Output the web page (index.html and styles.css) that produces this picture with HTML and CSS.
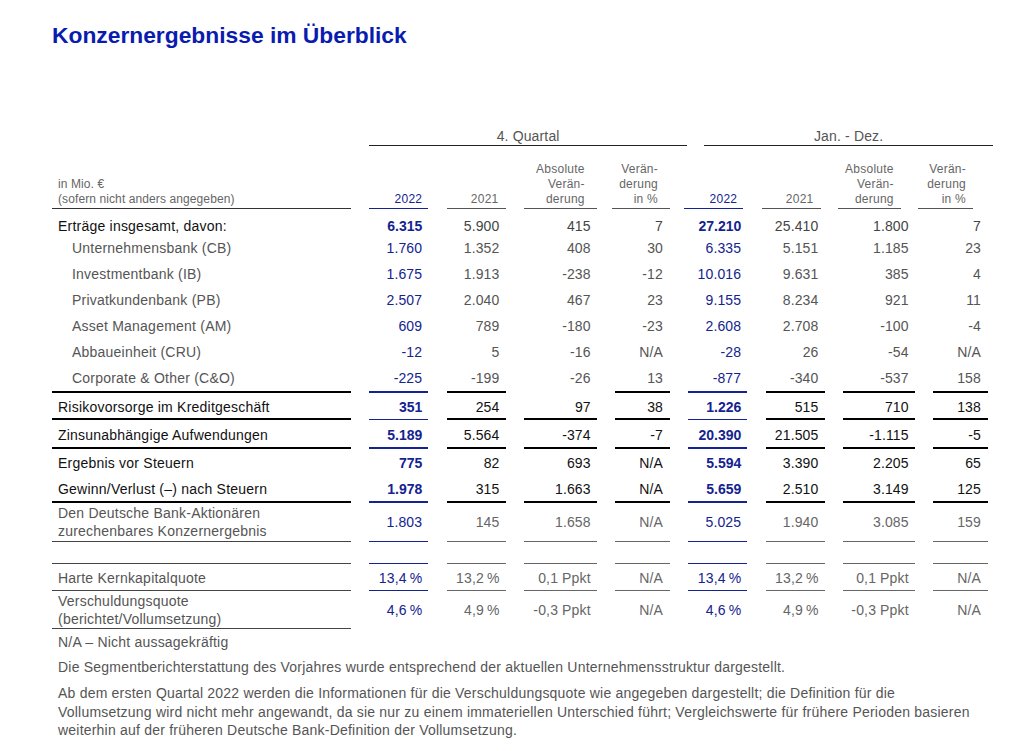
FILE: index.html
```html
<!DOCTYPE html>
<html lang="de">
<head>
<meta charset="utf-8">
<title>Konzernergebnisse im Überblick</title>
<link rel="stylesheet" href="styles.css">
</head>
<body>
<main class="page">
  <h1 class="title">Konzernergebnisse im Überblick</h1>

  <section class="table">
    <div class="tr groups">
      <div class="td label"></div>
      <div class="grp g1">4. Quartal</div>
      <div class="grp g2">Jan. - Dez.</div>
    </div>

    <div class="tr hdr">
      <div class="td label"><span>in Mio. €<br>(sofern nicht anders angegeben)</span></div>
      <div class="td y22 blue"><span>2022</span></div>
      <div class="td hq-21"><span>2021</span></div>
      <div class="td hq-abs"><span>Absolute<br>Verän-<br>derung</span></div>
      <div class="td hq-pct"><span>Verän-<br>derung<br>in %</span></div>
      <div class="td y22 blue hj-22"><span>2022</span></div>
      <div class="td hj-21"><span>2021</span></div>
      <div class="td hj-abs"><span>Absolute<br>Verän-<br>derung</span></div>
      <div class="td hj-pct"><span>Verän-<br>derung<br>in %</span></div>
    </div>

    <div class="tr r-first total">
      <div class="td label">Erträge insgesamt, davon:</div>
      <div class="td y22 bold">6.315</div><div class="td">5.900</div><div class="td">415</div><div class="td pct">7</div>
      <div class="td y22 bold">27.210</div><div class="td">25.410</div><div class="td">1.800</div><div class="td pct">7</div>
    </div>
    <div class="tr r-sub r-ub">
      <div class="td label sub">Unternehmensbank (CB)</div>
      <div class="td y22">1.760</div><div class="td">1.352</div><div class="td">408</div><div class="td pct">30</div>
      <div class="td y22">6.335</div><div class="td">5.151</div><div class="td">1.185</div><div class="td pct">23</div>
    </div>
    <div class="tr r-sub">
      <div class="td label sub">Investmentbank (IB)</div>
      <div class="td y22">1.675</div><div class="td">1.913</div><div class="td">-238</div><div class="td pct">-12</div>
      <div class="td y22">10.016</div><div class="td">9.631</div><div class="td">385</div><div class="td pct">4</div>
    </div>
    <div class="tr r-sub">
      <div class="td label sub">Privatkundenbank (PB)</div>
      <div class="td y22">2.507</div><div class="td">2.040</div><div class="td">467</div><div class="td pct">23</div>
      <div class="td y22">9.155</div><div class="td">8.234</div><div class="td">921</div><div class="td pct">11</div>
    </div>
    <div class="tr r-sub">
      <div class="td label sub">Asset Management (AM)</div>
      <div class="td y22">609</div><div class="td">789</div><div class="td">-180</div><div class="td pct">-23</div>
      <div class="td y22">2.608</div><div class="td">2.708</div><div class="td">-100</div><div class="td pct">-4</div>
    </div>
    <div class="tr r-sub">
      <div class="td label sub">Abbaueinheit (CRU)</div>
      <div class="td y22">-12</div><div class="td">5</div><div class="td">-16</div><div class="td pct">N/A</div>
      <div class="td y22">-28</div><div class="td">26</div><div class="td">-54</div><div class="td pct">N/A</div>
    </div>
    <div class="tr r-sub r-co thick">
      <div class="td label sub">Corporate &amp; Other (C&amp;O)</div>
      <div class="td y22">-225</div><div class="td">-199</div><div class="td nobr">-26</div><div class="td pct">13</div>
      <div class="td y22">-877</div><div class="td">-340</div><div class="td">-537</div><div class="td pct">158</div>
    </div>

    <div class="tr main r-risk thick thinblue">
      <div class="td label">Risikovorsorge im Kreditgeschäft</div>
      <div class="td y22 bold">351</div><div class="td">254</div><div class="td">97</div><div class="td pct">38</div>
      <div class="td y22 bold">1.226</div><div class="td">515</div><div class="td">710</div><div class="td pct">138</div>
    </div>
    <div class="tr main r-zins thick">
      <div class="td label">Zinsunabhängige Aufwendungen</div>
      <div class="td y22 bold">5.189</div><div class="td">5.564</div><div class="td">-374</div><div class="td pct">-7</div>
      <div class="td y22 bold">20.390</div><div class="td">21.505</div><div class="td">-1.115</div><div class="td pct">-5</div>
    </div>
    <div class="tr main r-erg">
      <div class="td label">Ergebnis vor Steuern</div>
      <div class="td y22 bold">775</div><div class="td">82</div><div class="td">693</div><div class="td pct">N/A</div>
      <div class="td y22 bold">5.594</div><div class="td">3.390</div><div class="td">2.205</div><div class="td pct">65</div>
    </div>
    <div class="tr main r-gew thick">
      <div class="td label">Gewinn/Verlust (–) nach Steuern</div>
      <div class="td y22 bold">1.978</div><div class="td">315</div><div class="td">1.663</div><div class="td pct">N/A</div>
      <div class="td y22 bold">5.659</div><div class="td">2.510</div><div class="td">3.149</div><div class="td pct">125</div>
    </div>
    <div class="tr muted r-db thin">
      <div class="td label two">Den Deutsche Bank-Aktionären<br>zurechenbares Konzernergebnis</div>
      <div class="td y22">1.803</div><div class="td">145</div><div class="td">1.658</div><div class="td pct">N/A</div>
      <div class="td y22">5.025</div><div class="td">1.940</div><div class="td">3.085</div><div class="td pct">159</div>
    </div>
    <div class="tr muted r-empty thin">
      <div class="td label"></div>
      <div class="td y22"></div><div class="td"></div><div class="td"></div><div class="td pct"></div>
      <div class="td y22"></div><div class="td"></div><div class="td"></div><div class="td pct"></div>
    </div>
    <div class="tr muted r-harte thin">
      <div class="td label">Harte Kernkapitalquote</div>
      <div class="td y22">13,4&thinsp;%</div><div class="td">13,2&thinsp;%</div><div class="td">0,1 Ppkt</div><div class="td pct">N/A</div>
      <div class="td y22">13,4&thinsp;%</div><div class="td">13,2&thinsp;%</div><div class="td">0,1 Ppkt</div><div class="td pct">N/A</div>
    </div>
    <div class="tr muted r-versch labelrule">
      <div class="td label two">Verschuldungsquote<br>(berichtet/Vollumsetzung)</div>
      <div class="td y22">4,6&thinsp;%</div><div class="td">4,9&thinsp;%</div><div class="td">-0,3 Ppkt</div><div class="td pct">N/A</div>
      <div class="td y22">4,6&thinsp;%</div><div class="td">4,9&thinsp;%</div><div class="td">-0,3 Ppkt</div><div class="td pct">N/A</div>
    </div>
  </section>

  <footer class="notes">
    <p class="note-na">N/A – Nicht aussagekräftig</p>
    <p>Die Segmentberichterstattung des Vorjahres wurde entsprechend der aktuellen Unternehmensstruktur dargestellt.</p>
    <p class="note-long">Ab dem ersten Quartal 2022 werden die Informationen für die Verschuldungsquote wie angegeben dargestellt; die Definition für die<br>Vollumsetzung wird nicht mehr angewandt, da sie nur zu einem immateriellen Unterschied führt; Vergleichswerte für frühere Perioden basieren<br>weiterhin auf der früheren Deutsche Bank-Definition der Vollumsetzung.</p>
  </footer>
</main>
</body>
</html>
```

FILE: styles.css
```css
* { box-sizing: border-box; }

html, body {
  margin: 0;
  padding: 0;
  background: #ffffff;
}

body {
  font-family: "Liberation Sans", Arial, sans-serif;
  color: #111;
}

.page {
  padding: 21px 0 0 52px;
  width: 1032px;
}

.title {
  margin: 0;
  font-size: 22.8px;
  line-height: 28px;
  font-weight: 700;
  color: #0a1cb0;
}

.table {
  margin-top: 78px;
  width: 936px;
  font-size: 14px;
  letter-spacing: 0.15px;
}

.tr {
  display: grid;
  grid-template-columns: 299px 59px 59px 73px 55px 59px 59px 72px 55px;
  column-gap: 18.25px;
}

.td {
  display: flex;
  align-items: center;
  justify-content: flex-end;
  text-align: right;
  padding-right: 6px;
  white-space: nowrap;
  color: #444;
}

.td.pct { padding-right: 7px; }

.td.label {
  justify-content: flex-start;
  text-align: left;
  padding-left: 6px;
  padding-right: 0;
  color: #111;
  letter-spacing: 0.22px;
}

.td.label.sub { padding-left: 20px; color: #555; }

.y22 { color: #14238f; }
.td.bold { font-weight: 700; color: #14238f; letter-spacing: 0; }

/* group header row */
.groups { height: 19px; }
.grp {
  border-bottom: 1px solid #222;
  text-align: center;
  color: #555;
  font-size: 14px;
  line-height: 18px;
}
.grp.g1 { grid-column: 2 / 6; margin-right: -17px; }
.grp.g2 { grid-column: 6 / 10; margin-left: 16px; margin-right: -5px; }

/* column header row */
.hdr { height: 63px; font-size: 12px; letter-spacing: 0.25px; }
.hdr .td {
  align-items: flex-end;
  line-height: 15px;
  padding-bottom: 1px;
  border-bottom: 1px solid #555;
  color: #666;
}
.hdr .td.label { color: #666; border-bottom-color: #333; letter-spacing: 0.1px; }
.hdr .td.blue { color: #14238f; border-bottom: 1.5px solid #14238f; }

.hdr .hq-21 { padding-right: 7px; }
.hdr .hq-abs { padding-right: 12px; }
.hdr .hq-pct { padding-right: 12px; margin-left: -3px; }
.hdr .hj-22 { margin-left: -4px; margin-right: 4px; }
.hdr .hj-21 { margin-left: -4px; margin-right: 4px; padding-right: 7px; }
.hdr .hj-abs { margin-left: -5px; margin-right: 14px; padding-right: 7px; }
.hdr .hj-pct { margin-left: -15px; margin-right: 15px; padding-right: 7px; }

/* data rows */
.r-first { height: 28px; }
.r-first .td { padding-top: 6px; }
.total .td { color: #444; }
.total .td.label { color: #111; }
.total .td.bold { color: #14238f; }

.r-sub { height: 26px; }
.r-sub .td { color: #555; }
.r-sub .td.y22 { color: #14238f; }
.r-ub { height: 24px; }
.r-ub .td { padding-bottom: 2px; }
.r-co { height: 28px; }

.main .td { color: #111; }
.main .td.bold { color: #14238f; }
.r-risk { height: 27px; }
.r-risk .td { padding-top: 2px; }
.r-zins { height: 29px; }
.r-zins .td { padding-top: 2px; }
.r-erg { height: 27px; }
.r-erg .td { padding-top: 1px; }
.r-gew { height: 27px; }

.muted .td { color: #666; }
.muted .td.label { color: #555; }
.muted .td.y22 { color: #14238f; }
.td.two { line-height: 18px; }

.r-db { height: 39px; }
.r-empty { height: 22px; }
.r-harte { height: 27px; }
.r-harte .td { padding-top: 1px; }
.r-versch { height: 38px; }

/* rules */
.thick .td { border-bottom: 2px solid #000; }
.thick .td.y22 { border-bottom-color: #14238f; }
.thick.thinblue .td.y22 { border-bottom-width: 1px; }
.thick .td.nobr { border-bottom-color: transparent; }

.thin .td { border-bottom: 1px solid #666; }
.thin .td.label { border-bottom-color: #444; }
.thin .td.y22 { border-bottom-color: #14238f; }

.labelrule .td.label { border-bottom: 1px solid #444; }

/* notes */
.notes {
  margin-top: 4px;
  padding-left: 6px;
  font-size: 14px;
  line-height: 18px;
  color: #555;
  letter-spacing: 0.21px;
}
.notes p { margin: 0 0 7px 0; white-space: nowrap; }
.notes .note-long { margin-top: 8px; line-height: 18.5px; }
```
